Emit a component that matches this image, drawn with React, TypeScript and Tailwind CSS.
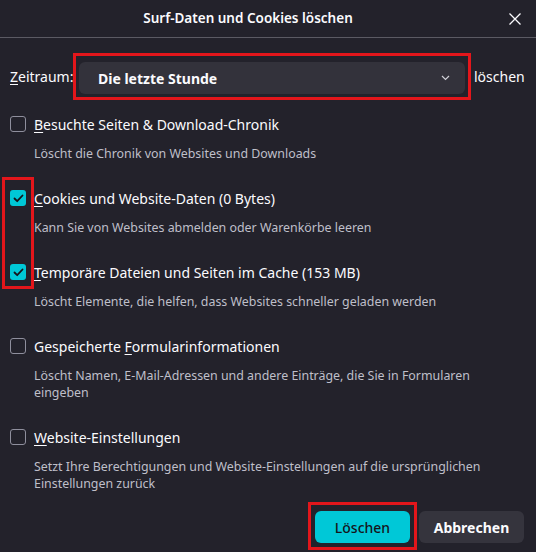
import { useState } from "react";

type Item = {
  key: string;
  label: string;
  accessKey: string;
  desc: string;
  checked: boolean;
};

const items: Item[] = [
  { key: "history", label: "Besuchte Seiten & Download-Chronik", accessKey: "B", desc: "Löscht die Chronik von Websites und Downloads", checked: false },
  { key: "cookies", label: "Cookies und Website-Daten (0 Bytes)", accessKey: "C", desc: "Kann Sie von Websites abmelden oder Warenkörbe leeren", checked: true },
  { key: "cache", label: "Temporäre Dateien und Seiten im Cache (153 MB)", accessKey: "T", desc: "Löscht Elemente, die helfen, dass Websites schneller geladen werden", checked: true },
  { key: "forms", label: "Gespeicherte Formularinformationen", accessKey: "F", desc: "Löscht Namen, E-Mail-Adressen und andere Einträge, die Sie in Formularen eingeben", checked: false },
  { key: "sitesettings", label: "Website-Einstellungen", accessKey: "W", desc: "Setzt Ihre Berechtigungen und Website-Einstellungen auf die ursprünglichen Einstellungen zurück", checked: false },
];

// underline the access key letter inside a label
function AccessLabel({ text, letter }: { text: string; letter: string }) {
  const i = text.indexOf(letter);
  if (i < 0) return <span>{text}</span>;
  return (
    <span>
      {text.slice(0, i)}
      <span className="underline underline-offset-2">{text[i]}</span>
      {text.slice(i + 1)}
    </span>
  );
}

function Checkbox({ checked, onChange }: { checked: boolean; onChange: () => void }) {
  return (
    <button
      onClick={onChange}
      className={`w-4 h-4 shrink-0 rounded-[3px] flex items-center justify-center ${
        checked ? "bg-[#00c8d7]" : "border border-[#8f8f9d] bg-transparent"
      }`}
    >
      {checked && (
        <svg width="11" height="9" viewBox="0 0 11 9" fill="none">
          <path d="M1.5 4.5 L4.2 7.2 L9.5 1.5" stroke="#15141a" strokeWidth="1.8" strokeLinecap="round" strokeLinejoin="round" />
        </svg>
      )}
    </button>
  );
}

export default function App() {
  const [state, setState] = useState(items.map((i) => i.checked));

  return (
    <div
      className="w-[536px] h-[552px] bg-[#23222b] text-[#fbfbfe] overflow-hidden flex flex-col"
      style={{ fontFamily: '"Noto Sans", "Open Sans", sans-serif' }}
    >
      {/* Header */}
      <div className="h-[38px] flex items-center border-b border-[#5b5a63] shrink-0">
        <div className="flex-1 text-center text-[13.5px] font-semibold pl-[2px]">Surf-Daten und Cookies löschen</div>
        <button className="w-[42px] h-full flex items-center justify-center">
          <svg width="12" height="12" viewBox="0 0 12 12">
            <path d="M0.5 0.5 L11.5 11.5 M11.5 0.5 L0.5 11.5" stroke="#fbfbfe" strokeWidth="1.3" />
          </svg>
        </button>
      </div>

      {/* Time range */}
      <div className="flex items-center pl-[10px] pt-[15px] text-[14px]">
        <span className="w-[63px]">
          <AccessLabel text="Zeitraum:" letter="Z" />
        </span>
        <div className="border-[3px] border-[#e3161b] px-[3px] pt-[6px] pb-[3px]">
          <div className="w-[386px] h-[32px] rounded-md bg-[#33323b] flex items-center pl-[19px] pr-[15px]">
            <span className="flex-1 font-bold">Die letzte Stunde</span>
            <svg width="9" height="6" viewBox="0 0 9 6">
              <path d="M1 1 L4.5 4.5 L8 1" stroke="#d0d0d7" strokeWidth="1.2" fill="none" />
            </svg>
          </div>
        </div>
        <span className="ml-[3px]">löschen</span>
      </div>

      {/* Data types */}
      <div className="relative flex flex-col pl-[10px] pt-[13px] gap-[25px]">
        {items.map((item, idx) => (
          <div key={item.key} className="flex flex-col">
            <label className="flex items-center gap-[8px] h-[22px] text-[14px]">
              <Checkbox
                checked={state[idx]}
                onChange={() => setState((s) => s.map((v, j) => (j === idx ? !v : v)))}
              />
              <AccessLabel text={item.label} letter={item.accessKey} />
            </label>
            <p className="pl-[24px] pt-[10px] text-[12.4px] leading-[17px] text-[#bfbfc9] pr-6">{item.desc}</p>
          </div>
        ))}
        <div className="absolute left-[2px] top-[77px] w-[32px] h-[112px] border-[3px] border-[#e3161b] pointer-events-none" />
      </div>

      {/* Actions */}
      <div className="flex-1" />
      <div className="flex items-center justify-end pr-[12px] pb-[2px] gap-[2px]">
        <div className="border-[3px] border-[#e3161b] px-[4px] pt-[6px] pb-[4px]">
          <button className="w-[95px] h-[32px] rounded-md bg-[#00c8d7] text-[#15141a] text-[14px] font-medium">Löschen</button>
        </div>
        <button className="w-[105px] h-[32px] rounded-md bg-[#35343d] text-[14px] font-bold mb-[-2px]">Abbrechen</button>
      </div>
    </div>
  );
}
